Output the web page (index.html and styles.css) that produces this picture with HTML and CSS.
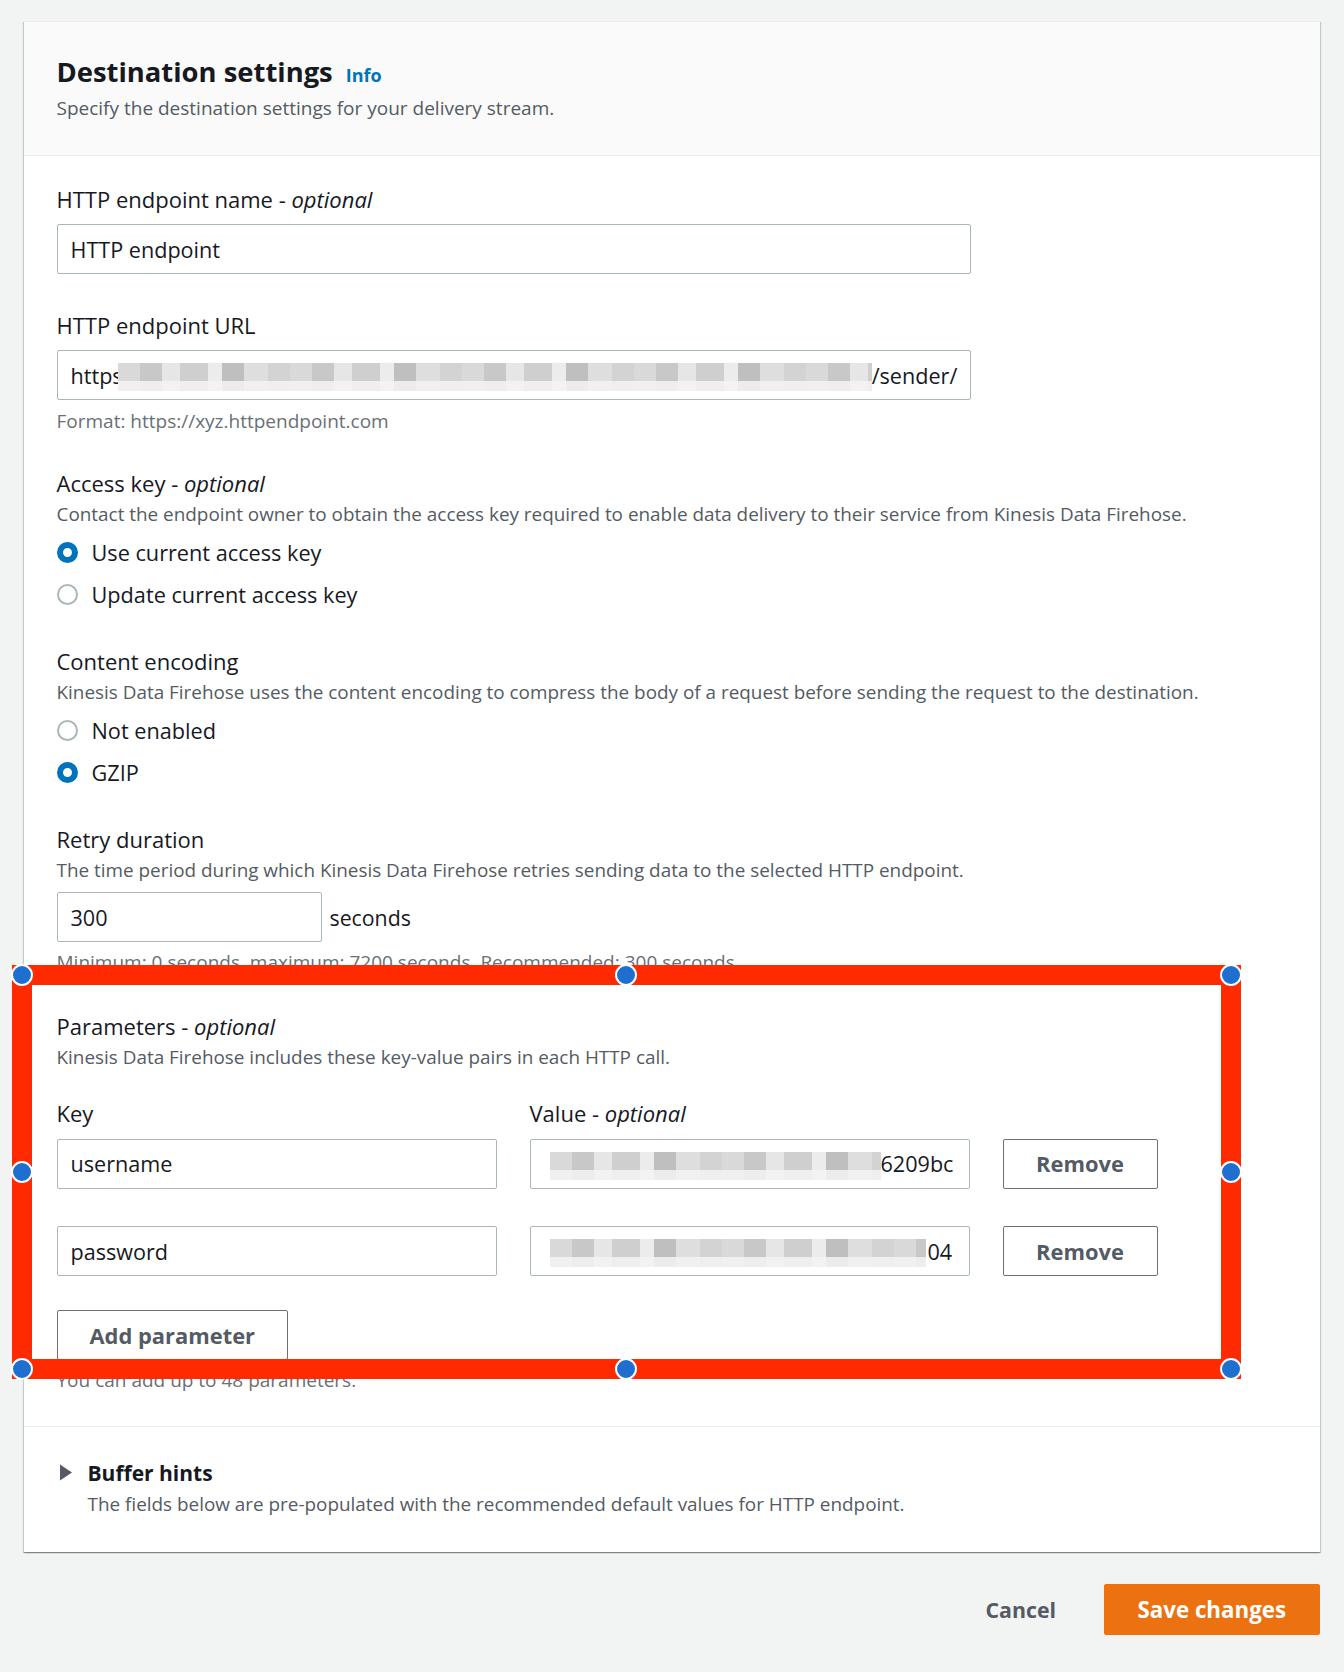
FILE: index.html
```html
<!DOCTYPE html>
<html lang="en">
<head>
<meta charset="utf-8">
<title>Destination settings</title>
<link rel="stylesheet" href="styles.css">
</head>
<body>
<div class="page">
  <section class="card">
    <header class="card-header">
      <h2 class="title">Destination settings <a class="info">Info</a></h2>
      <p class="subtitle">Specify the destination settings for your delivery stream.</p>
    </header>

    <div class="card-body">
      <div class="field">
        <div class="label">HTTP endpoint name - <i>optional</i></div>
        <div class="input wide">HTTP endpoint</div>
      </div>

      <div class="field sec">
        <div class="label">HTTP endpoint URL</div>
        <div class="input wide"><span>https</span><span class="mosaic mz-url"></span><span>/sender/</span></div>
        <div class="hint">Format: https://xyz.httpendpoint.com</div>
      </div>

      <div class="field sec">
        <div class="label">Access key - <i>optional</i></div>
        <div class="desc">Contact the endpoint owner to obtain the access key required to enable data delivery to their service from Kinesis Data Firehose.</div>
        <div class="radios">
          <div class="radio"><span class="dot on"></span><span>Use current access key</span></div>
          <div class="radio"><span class="dot"></span><span>Update current access key</span></div>
        </div>
      </div>

      <div class="field sec">
        <div class="label">Content encoding</div>
        <div class="desc">Kinesis Data Firehose uses the content encoding to compress the body of a request before sending the request to the destination.</div>
        <div class="radios">
          <div class="radio"><span class="dot"></span><span>Not enabled</span></div>
          <div class="radio"><span class="dot on"></span><span>GZIP</span></div>
        </div>
      </div>

      <div class="field sec">
        <div class="label">Retry duration</div>
        <div class="desc">The time period during which Kinesis Data Firehose retries sending data to the selected HTTP endpoint.</div>
        <div class="retry">
          <div class="input short">300</div>
          <span class="unit">seconds</span>
        </div>
        <div class="hint">Minimum: 0 seconds, maximum: 7200 seconds. Recommended: 300 seconds.</div>
      </div>

      <div class="field sec params">
        <div class="label">Parameters - <i>optional</i></div>
        <div class="desc">Kinesis Data Firehose includes these key-value pairs in each HTTP call.</div>
        <div class="kv-head">
          <div class="label">Key</div>
          <div class="label">Value - <i>optional</i></div>
        </div>
        <div class="kv-row first">
          <div class="input">username</div>
          <div class="input"><span class="mosaic mz-v1"></span><span>6209bc</span></div>
          <button class="btn">Remove</button>
        </div>
        <div class="kv-row">
          <div class="input">password</div>
          <div class="input"><span class="mosaic mz-v2"></span><span>04</span></div>
          <button class="btn">Remove</button>
        </div>
        <button class="btn add">Add parameter</button>
        <div class="hint">You can add up to 48 parameters.</div>
      </div>
    </div>

    <div class="card-footer">
      <div class="expander">
        <svg class="caret" width="14" height="17" viewBox="0 0 14 17"><polygon points="1,0.5 13,8.5 1,16.5" fill="#545b64"/></svg>
        <span>Buffer hints</span>
      </div>
      <div class="desc indent">The fields below are pre-populated with the recommended default values for HTTP endpoint.</div>
    </div>
  </section>

  <div class="actions">
    <button class="link-btn">Cancel</button>
    <button class="primary">Save changes</button>
  </div>
</div>

<div class="annot">
  <span class="handle h-tl"></span>
  <span class="handle h-tc"></span>
  <span class="handle h-tr"></span>
  <span class="handle h-ml"></span>
  <span class="handle h-mr"></span>
  <span class="handle h-bl"></span>
  <span class="handle h-bc"></span>
  <span class="handle h-br"></span>
</div>
</body>
</html>
```

FILE: styles.css
```css
* { box-sizing: border-box; }
html, body { margin: 0; padding: 0; }
body {
  background: #f2f3f3;
  font-family: "Open Sans", "Noto Sans", sans-serif;
  color: #16191f;
  width: 1344px;
  min-height: 1672px;
  position: relative;
}
.page {
  padding: 21px 0 0 23.5px;
  width: 1319.5px;
}
.card {
  background: #fff;
  width: 1296px;
  border-top: 1px solid #eaeded;
  box-shadow: 0 1px 1px 0 rgba(0,28,36,0.3), 1px 1px 1px 0 rgba(0,28,36,0.15), -1px 1px 1px 0 rgba(0,28,36,0.15);
}
.card-header {
  background: #fafafa;
  border-bottom: 1px solid #eaeded;
  padding: 34px 33px 36px;
}
.title {
  margin: 0;
  font-size: 27.4px;
  line-height: 32px;
  font-weight: 700;
  color: #16191f;
  display: flex;
  align-items: baseline;
  gap: 13px;
}
.info {
  font-size: 18px;
  font-weight: 700;
  color: #0073bb;
}
.subtitle {
  margin: 5.5px 0 0;
  font-size: 19px;
  line-height: 22px;
  color: #545b64;
}
.card-body {
  padding: 30.5px 33px 35px;
}
.sec { margin-top: 38px; }
.params { margin-top: 39.5px; }
.label {
  font-size: 22px;
  line-height: 26px;
  color: #16191f;
}
.label i { font-style: italic; }
.desc {
  font-size: 18.9px;
  line-height: 22px;
  color: #545b64;
  margin-top: 7px;
}
.hint {
  font-size: 19px;
  line-height: 22px;
  color: #687078;
  margin-top: 10px;
}
.input {
  height: 50px;
  border: 1px solid #aab7b8;
  border-radius: 2px;
  background: #fff;
  padding: 0 13px;
  display: flex;
  align-items: center;
  font-size: 21.6px;
  color: #16191f;
  white-space: nowrap;
  overflow: hidden;
}
.field > .label + .input { margin-top: 12px; }
.wide { width: 914px; }
.short { width: 265.5px; }
.mosaic {
  display: block;
  flex: none;
  align-self: stretch;
  margin: 12px 0 8px;
  background:
    linear-gradient(to bottom, rgba(255,255,255,0) 0 66%, rgba(244,244,244,0.85) 66% 100%),
    repeating-linear-gradient(90deg, #d9d9d9 0 22px, #c8c8c8 22px 44px, #e6e6e6 44px 62px, #cfcfcf 62px 90px, #ececec 90px 104px, #bfbfbf 104px 126px, #dedede 126px 150px, #d3d3d3 150px 172px);
}
.mz-url { width: 754px; margin-left: -5px; }
.mz-v1 { width: 331px; margin-left: 6px; }
.mz-v2 { width: 376px; margin-left: 6px; margin-right: 2px; }
.radios {
  margin-top: 11px;
  display: flex;
  flex-direction: column;
  gap: 10px;
}
.radio {
  display: flex;
  align-items: center;
  gap: 14px;
  height: 32px;
  font-size: 21.7px;
  color: #16191f;
}
.dot {
  width: 21px;
  height: 21px;
  border-radius: 50%;
  border: 2px solid #aab7b8;
  background: #fff;
  flex: none;
}
.dot.on { border: 6px solid #0073bb; }
.retry {
  margin-top: 11px;
  display: flex;
  align-items: center;
  gap: 7.5px;
}
.unit { font-size: 21.3px; color: #16191f; }
.retry + .hint { margin-top: 9px; }
.kv-head, .kv-row {
  display: grid;
  grid-template-columns: 440px 440px 155px;
  column-gap: 33px;
}
.kv-head { margin-top: 32.5px; }
.kv-row.first { margin-top: 12.5px; }
.kv-row { margin-top: 37.5px; }
.btn {
  height: 50px;
  border: 1px solid #687078;
  border-radius: 2px;
  background: #fff;
  color: #545b64;
  font-family: inherit;
  font-size: 21.9px;
  font-weight: 700;
  padding: 0 20px;
  cursor: pointer;
}
.btn.add {
  display: block;
  margin-top: 34px;
  width: 231.5px;
  padding: 0;
}
.btn.add + .hint { margin-top: 9px; }
.card-footer {
  border-top: 1px solid #eaeded;
  padding: 32.5px 33px 37px;
}
.expander {
  display: flex;
  align-items: center;
  height: 26px;
  font-size: 21px;
  font-weight: 700;
  color: #16191f;
}
.caret { margin-left: 2px; margin-right: 15px; flex: none; }
.indent { margin-left: 31px; }
.actions {
  margin-top: 32px;
  display: flex;
  justify-content: flex-end;
  align-items: center;
  width: 1296px;
}
.link-btn {
  background: none;
  border: none;
  font-family: inherit;
  font-size: 21.3px;
  font-weight: 700;
  color: #545b64;
  padding: 0 20px;
  height: 51px;
  margin-right: 28px;
}
.primary {
  background: #ec7211;
  border: 1px solid #ec7211;
  border-radius: 2px;
  color: #fff;
  font-family: inherit;
  font-size: 22.3px;
  font-weight: 700;
  height: 51px;
  width: 215.5px;
  padding: 0;
}
.annot {
  position: absolute;
  left: 11.5px;
  top: 965px;
  width: 1229px;
  height: 414px;
  border: 20px solid #ff2a00;
}
.handle {
  position: absolute;
  width: 22px;
  height: 22px;
  border-radius: 50%;
  background: #1f6fd1;
  border: 2px solid #fff;
}
.h-tl, .h-ml, .h-bl { left: -21px; }
.h-tc, .h-bc { left: 583.5px; }
.h-tr, .h-mr, .h-br { left: 1188px; }
.h-tl, .h-tc, .h-tr { top: -21px; }
.h-ml, .h-mr { top: 176px; }
.h-bl, .h-bc, .h-br { top: 373px; }
```
